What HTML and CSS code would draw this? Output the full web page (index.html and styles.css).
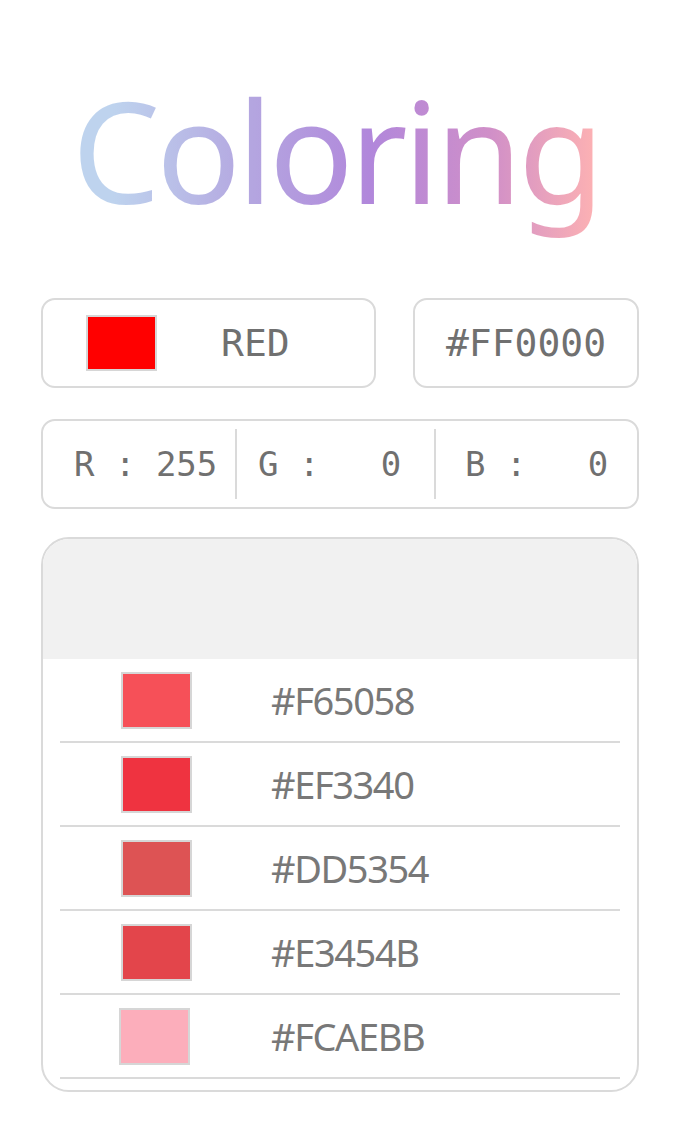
FILE: index.html
```html
<!DOCTYPE html>
<html>
<head>
<meta charset="utf-8">
<link rel="stylesheet" href="styles.css">
</head>
<body>
<div class="page">
  <h1 class="title">Coloring</h1>
  <div class="top-row">
    <div class="card name-card">
      <span class="swatch big" style="background:#FF0000"></span>
      <span class="mono name">RED</span>
    </div>
    <div class="card hex-card">
      <span class="mono hex">#FF0000</span>
    </div>
  </div>
  <div class="card rgb-card">
    <div class="rgb-cell c1"><span class="mono rgb">R : 255</span></div>
    <div class="rgb-sep"></div>
    <div class="rgb-cell c2"><span class="mono rgb">G :   0</span></div>
    <div class="rgb-sep"></div>
    <div class="rgb-cell c3"><span class="mono rgb">B :   0</span></div>
  </div>
  <div class="list">
    <div class="list-head"></div>
    <div class="list-row"><span class="swatch" style="background:#F65058"></span><span class="code">#F65058</span></div>
    <div class="list-row"><span class="swatch" style="background:#EF3340"></span><span class="code">#EF3340</span></div>
    <div class="list-row"><span class="swatch" style="background:#DD5354"></span><span class="code">#DD5354</span></div>
    <div class="list-row"><span class="swatch" style="background:#E3454B"></span><span class="code">#E3454B</span></div>
    <div class="list-row last"><span class="swatch shift" style="background:#FCAEBB"></span><span class="code">#FCAEBB</span></div>
  </div>
</div>
</body>
</html>
```

FILE: styles.css
```css
* { box-sizing: border-box; }
html, body { margin: 0; padding: 0; background: #fff; }
body { font-family: "Noto Sans", sans-serif; }
.page {
  width: 680px;
  padding: 0 41px 0 41px;
}
.title {
  margin: 0;
  height: 298px;
  padding-top: 60px;
  font-family: "Noto Sans", sans-serif;
  font-weight: 400;
  font-size: 140px;
  line-height: 180px;
  text-align: center;
  letter-spacing: -4px;
  padding-right: 8px;
  background: linear-gradient(90deg, #BED3EE 12%, #B4A6E0 35%, #B187DB 55%, #D08FC8 75%, #FBB0B4 92%);
  -webkit-background-clip: text;
  background-clip: text;
  color: transparent;
}
.card {
  border: 2px solid #dadada;
  border-radius: 14px;
  height: 90px;
  display: flex;
  align-items: center;
}
.top-row {
  display: flex;
  gap: 37px;
}
.name-card { width: 335px; padding-left: 43px; }
.hex-card { flex: 1; justify-content: center; }
.mono {
  font-family: "DejaVu Sans Mono", monospace;
  color: #707070;
  white-space: pre;
}
.name, .hex { font-size: 38px; }
.name { margin-left: 64px; }
.swatch {
  display: block;
  width: 71px;
  height: 56px;
  border: 2px solid #d6d6d6;
}
.rgb-card {
  margin-top: 31px;
  align-items: stretch;
  padding: 8px 0;
}
.rgb-cell {
  display: flex;
  align-items: center;
}
.rgb-cell.c1 { width: 192px; padding-left: 31px; }
.rgb-cell.c2 { width: 197px; padding-left: 21px; }
.rgb-cell.c3 { flex: 1; padding-left: 29px; }
.rgb { font-size: 34px; }
.rgb-sep {
  width: 2px;
  background: #dadada;
}
.list {
  margin-top: 28px;
  border: 2px solid #dadada;
  border-radius: 28px;
  overflow: hidden;
  padding-bottom: 11px;
}
.list-head {
  height: 120px;
  background: #f1f1f1;
}
.list-row {
  height: 84px;
  margin: 0 17px;
  border-bottom: 2px solid #dadada;
  display: flex;
  align-items: center;
  padding-left: 61px;
}
.list-row .swatch { width: 71px; height: 57px; }
.list-row .swatch.shift { margin-left: -2px; margin-right: 2px; }
.code {
  margin-left: 79px;
  font-size: 38px;
  letter-spacing: -1.4px;
  color: #787878;
}
```
